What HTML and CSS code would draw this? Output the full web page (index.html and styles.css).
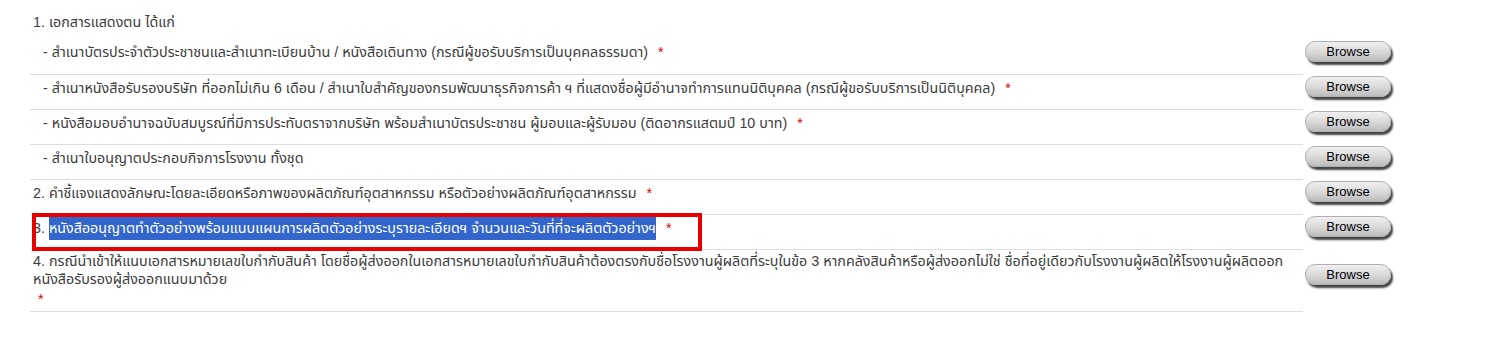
FILE: index.html
```html
<!DOCTYPE html>
<html lang="th">
<head>
    <meta charset="UTF-8">
    <title>เอกสารประกอบคำขอ</title>
    <link rel="stylesheet" href="styles.css">
</head>
<body>
    <table class="docs">
        <tr class="head">
            <td class="text">1. เอกสารแสดงตน ได้แก่</td>
            <td class="act"></td>
        </tr>
        <tr>
            <td class="text sub">- สำเนาบัตรประจำตัวประชาชนและสำเนาทะเบียนบ้าน / หนังสือเดินทาง (กรณีผู้ขอรับบริการเป็นบุคคลธรรมดา) <span class="req">*</span></td>
            <td class="act"><button class="browse">Browse</button></td>
        </tr>
        <tr>
            <td class="text sub">- สำเนาหนังสือรับรองบริษัท ที่ออกไม่เกิน 6 เดือน / สำเนาใบสำคัญของกรมพัฒนาธุรกิจการค้า ฯ ที่แสดงชื่อผู้มีอำนาจทำการแทนนิติบุคคล (กรณีผู้ขอรับบริการเป็นนิติบุคคล) <span class="req">*</span></td>
            <td class="act"><button class="browse">Browse</button></td>
        </tr>
        <tr>
            <td class="text sub">- หนังสือมอบอำนาจฉบับสมบูรณ์ที่มีการประทับตราจากบริษัท พร้อมสำเนาบัตรประชาชน ผู้มอบและผู้รับมอบ (ติดอากรแสตมป์ 10 บาท) <span class="req">*</span></td>
            <td class="act"><button class="browse">Browse</button></td>
        </tr>
        <tr>
            <td class="text sub">- สำเนาใบอนุญาตประกอบกิจการโรงงาน ทั้งชุด</td>
            <td class="act"><button class="browse">Browse</button></td>
        </tr>
        <tr>
            <td class="text">2. คำชี้แจงแสดงลักษณะโดยละเอียดหรือภาพของผลิตภัณฑ์อุตสาหกรรม หรือตัวอย่างผลิตภัณฑ์อุตสาหกรรม <span class="req">*</span></td>
            <td class="act"><button class="browse">Browse</button></td>
        </tr>
        <tr>
            <td class="text marked">3. <span class="selected">หนังสืออนุญาตทำตัวอย่างพร้อมแนบแผนการผลิตตัวอย่างระบุรายละเอียดฯ จำนวนและวันที่ที่จะผลิตตัวอย่างฯ</span> <span class="req">*</span><div class="mark"></div></td>
            <td class="act"><button class="browse">Browse</button></td>
        </tr>
        <tr class="tall">
            <td class="text">4. กรณีนำเข้าให้แนบเอกสารหมายเลขใบกำกับสินค้า โดยชื่อผู้ส่งออกในเอกสารหมายเลขใบกำกับสินค้าต้องตรงกับชื่อโรงงานผู้ผลิตที่ระบุในข้อ 3 หากคลังสินค้าหรือผู้ส่งออกไม่ใช่ ชื่อที่อยู่เดียวกับโรงงานผู้ผลิตให้โรงงานผู้ผลิตออก<br>หนังสือรับรองผู้ส่งออกแนบมาด้วย
                <div class="req req-line">*</div>
            </td>
            <td class="act"><button class="browse">Browse</button></td>
        </tr>
    </table>
</body>
</html>
```

FILE: styles.css
```css
body {
    margin: 8px;
    background-color: #fff;
    font-family: 'Liberation Sans', 'Noto Sans Thai', 'Noto Sans', sans-serif;
    font-size: 14.3px;
    color: #3c3c3c;
}

.docs {
    border-collapse: collapse;
    margin-left: 22px;
}

.docs td {
    padding: 0;
    vertical-align: top;
}

.text {
    width: 1273px;
    height: 35px;
    padding: 5px 3px 0 3px !important;
    line-height: 16px;
    border-bottom: 1px solid #ddd;
    box-sizing: border-box;
    white-space: nowrap;
}

.head .text {
    height: 31px;
    padding-top: 6px !important;
    border-bottom: none;
}

.sub {
    padding-left: 13px !important;
}

.act {
    width: 100px;
    padding: 2px 0 0 2px !important;
}

.req {
    color: #d00;
    margin-left: 6px;
}

.req-line {
    margin: 3px 0 0 5px;
    line-height: 16px;
}

.tall .text {
    height: 62px;
    padding-top: 2px !important;
    line-height: 18px;
}

.tall .act {
    padding-top: 15px !important;
}

.marked {
    position: relative;
}

.selected {
    background-color: #3366cc;
    color: #fff;
    padding: 5px 0 4px;
}

/* red annotation frame drawn over row 3 */
.mark {
    position: absolute;
    left: 2px;
    top: -2px;
    width: 670px;
    height: 38px;
    border: 4px solid #e60000;
    box-sizing: border-box;
}

.browse {
    width: 86px;
    height: 21px;
    padding: 0;
    border: 1px solid #b0b0b0;
    border-radius: 10px;
    background: linear-gradient(#f0f0f0, #d8d8d8 55%, #bcbcbc);
    box-shadow: 2px 3px 2px #444;
    font-family: 'Liberation Sans', Arial, sans-serif;
    font-size: 13px;
    color: #000;
    cursor: pointer;
}
```
